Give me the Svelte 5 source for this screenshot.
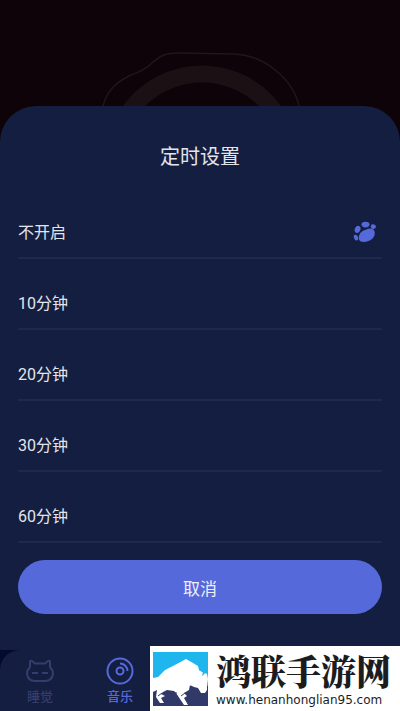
<script>
  const options = [
    { value: 0, label: "不开启" },
    { value: 10, label: "10分钟" },
    { value: 20, label: "20分钟" },
    { value: 30, label: "30分钟" },
    { value: 60, label: "60分钟" },
  ];

  let selected = $state(0);
</script>

<div class="screen">
  <div class="player">
    <svg class="rings" viewBox="0 0 240 76" aria-hidden="true">
      <circle cx="122" cy="133" r="89" fill="none" stroke="#1b1014" stroke-width="17" />
      <path
        d="M23 76C27 60 37 52 49 46C58 42 64 41 72 33C81 25 86 23 98 23L154 24C170 25 183 30 194 39C208 50 216 62 219 76"
        fill="none"
        stroke="#21161b"
        stroke-width="1.5"
      />
    </svg>
  </div>

  <section class="sheet">
    <h1>定时设置</h1>

    <div class="options" role="radiogroup" aria-label="定时设置">
      {#each options as option (option.value)}
        <label class="option">
          <span>{option.label}</span>
          <input type="radio" name="timer" value={option.value} bind:group={selected} />
          {#if selected === option.value}
            <svg class="paw" viewBox="0 0 24 24" aria-hidden="true">
              <ellipse cx="4.6" cy="8.3" rx="2.8" ry="3.6" transform="rotate(22 4.6 8.3)" />
              <ellipse cx="12.5" cy="3.6" rx="4" ry="2.800" />
              <ellipse cx="20.3" cy="5.6" rx="2.6" ry="2.2" transform="rotate(20 20.3 5.6)" />
              <ellipse cx="3" cy="16.6" rx="2" ry="3" transform="rotate(-22 3 16.6)" />
              <path
                d="M6 15C7 11 10 9.500 13 8.700C15.500 7 19 7 20.700 8.800C22.500 11 22 15.500 19.500 17.500C17.500 19.500 14 21 10.500 21C6.500 20.700 5.200 18.500 6 15Z"
              />
            </svg>
          {/if}
        </label>
      {/each}
    </div>

    <button class="cancel" type="button">取消</button>
  </section>

  <div class="dock">
    <nav class="tabs">
      <a class="tab" href="#sleep">
        <svg viewBox="0 0 28 28" aria-hidden="true">
          <path
            d="M4 10V5Q4 3 6 4L9 6.500H19L22 4Q24 3 24 5V10Q27 13 27 17Q26 24 19 24H9Q2 24 1 17Q1 13 4 10Z"
          />
          <path d="M6 16H12M16 16H22" />
        </svg>
        <span>睡觉</span>
      </a>
      <a class="tab active" href="#music" aria-current="page">
        <svg viewBox="0 0 28 28" aria-hidden="true">
          <circle cx="14" cy="14" r="12.500" />
          <circle cx="14" cy="14" r="3.500" />
          <path d="M14 6.500A7.500 7.500 0 0 1 21.500 14" />
        </svg>
        <span>音乐</span>
      </a>
    </nav>
  </div>

  <aside class="banner">
    <svg class="bison" viewBox="0 0 55 54" aria-hidden="true">
      <rect width="55" height="54" fill="#1fb6ed" />
      <path d="M0 34H55V54H0Z" fill="#303968" />
      <path
        d="M0 26L5 25L12 18L20 14L33 7L40 11L45 14L46 18L49 20L54 22L55 27L54 33V38L52 41H48L45 36L41 35L37 33L36 38L31 41L34 44L31 46L35 53H31L25 44L23 41L21 39L14 38L10 40L8 42L12 44L8 46L11 51H7L3 45L4 38L0 40Z"
        fill="#fff"
      />
      <path d="M50 11Q45 14 46 18L50 20L49 24Q54 21 51 17L48 17Z" fill="#1fb6ed" />
      <path d="M13 41H24M28 44L32 41M5 44L9 41" stroke="#303968" fill="none" />
    </svg>
    <div class="site">
      <strong>鸿联手游网</strong>
      <span>www.henanhonglian95.com</span>
    </div>
  </aside>
</div>

<style>
  :global(body) {
    margin: 0;
    background: #0e0308;
  }

  .screen {
    position: relative;
    min-height: 100vh;
    display: flex;
    flex-direction: column;
    overflow: hidden;
    background: #0e0308;
    color: #e3e5ec;
    font-family: Roboto, "Noto Sans CJK SC", sans-serif;
  }

  .player {
    display: flex;
    justify-content: center;
    padding-top: 30px;
  }

  .rings {
    display: block;
    width: 240px;
    height: 76px;
  }

  .sheet {
    flex: 1;
    padding: 37px 18px 36px;
    border-radius: 36px 36px 0 0;
    background: #141e40;
  }

  h1 {
    margin: 0 0 17px;
    font-size: 20px;
    font-weight: 400;
    line-height: 28px;
    text-align: center;
  }

  .option {
    display: flex;
    align-items: center;
    justify-content: space-between;
    padding: 33px 0 12px;
    border-bottom: 2px solid #202947;
    font-size: 16px;
    line-height: 24px;
    cursor: pointer;
  }

  .option input {
    appearance: none;
    width: 0;
    height: 0;
    margin: 0;
  }

  .option:focus-within {
    border-bottom-color: #5669db;
  }

  .paw {
    width: 24px;
    height: 24px;
    margin-right: 5px;
    fill: #5669db;
  }

  .cancel {
    display: block;
    width: 100%;
    height: 54px;
    margin-top: 17px;
    border: 0;
    border-radius: 27px;
    background: #5669db;
    color: #eef0fb;
    font: inherit;
    font-size: 17px;
    cursor: pointer;
  }

  .dock {
    background: #020b2b;
  }

  .tabs {
    display: grid;
    grid-template-columns: repeat(5, 1fr);
    height: 61px;
    border-radius: 20px 20px 0 0;
    background: #141e40;
  }

  .tab {
    display: flex;
    flex-direction: column;
    align-items: center;
    gap: 2px;
    padding-top: 7px;
    color: #343d6c;
    font-size: 13px;
    font-weight: 500;
    line-height: 20px;
    text-decoration: none;
  }

  .tab svg {
    width: 28px;
    height: 28px;
    fill: none;
    stroke: currentColor;
    stroke-width: 2;
  }

  .tab.active {
    color: #5669db;
  }

  .banner {
    position: absolute;
    right: 0;
    bottom: 0;
    display: flex;
    gap: 8px;
    box-sizing: border-box;
    width: 250px;
    height: 65px;
    padding: 6px 3px;
    background: #fff;
    color: #1c1c1e;
  }

  .bison {
    flex: none;
    width: 55px;
    height: 54px;
  }

  .site {
    display: flex;
    flex-direction: column;
    gap: 4px;
    white-space: nowrap;
  }

  .site strong {
    font-family: "Noto Serif CJK SC", "Noto Sans CJK SC", serif;
    font-size: 35px;
    font-weight: 900;
    line-height: 36px;
  }

  .site span {
    font-family: "DejaVu Sans", sans-serif;
    font-size: 12px;
    line-height: 16px;
  }
</style>
